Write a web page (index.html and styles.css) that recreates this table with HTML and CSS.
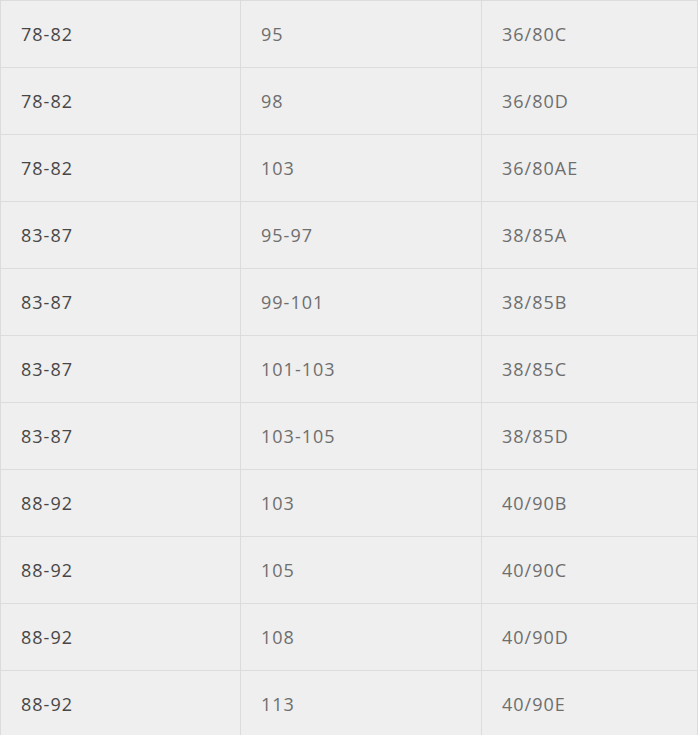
FILE: index.html
```html
<!DOCTYPE html>
<html>
<head>
<meta charset="utf-8">
<link rel="stylesheet" href="styles.css">
</head>
<body>
<table class="size-table">
<tbody>
<tr><td>78-82</td><td>95</td><td>36/80C</td></tr>
<tr><td>78-82</td><td>98</td><td>36/80D</td></tr>
<tr><td>78-82</td><td>103</td><td>36/80AE</td></tr>
<tr><td>83-87</td><td>95-97</td><td>38/85A</td></tr>
<tr><td>83-87</td><td>99-101</td><td>38/85B</td></tr>
<tr><td>83-87</td><td>101-103</td><td>38/85C</td></tr>
<tr><td>83-87</td><td>103-105</td><td>38/85D</td></tr>
<tr><td>88-92</td><td>103</td><td>40/90B</td></tr>
<tr><td>88-92</td><td>105</td><td>40/90C</td></tr>
<tr><td>88-92</td><td>108</td><td>40/90D</td></tr>
<tr><td>88-92</td><td>113</td><td>40/90E</td></tr>
</tbody>
</table>
</body>
</html>
```
FILE: styles.css
```css
html, body {
  margin: 0;
  padding: 0;
  background: #ffffff;
}
.size-table {
  border-collapse: collapse;
  width: 697px;
  table-layout: fixed;
  background: #efefef;
  font-family: "Open Sans", "Noto Sans", sans-serif;
  font-size: 18px;
  letter-spacing: 1px;
}
.size-table td {
  border: 1px solid #dcdcdc;
  height: 67px;
  padding: 0 0 0 20px;
  box-sizing: border-box;
  color: #6e6e6e;
  vertical-align: middle;
  line-height: 1;
}
.size-table td:nth-child(1) { width: 240px; color: #474747; }
.size-table td:nth-child(2) { width: 241px; }
.size-table td:nth-child(3) { width: 216px; }
```
